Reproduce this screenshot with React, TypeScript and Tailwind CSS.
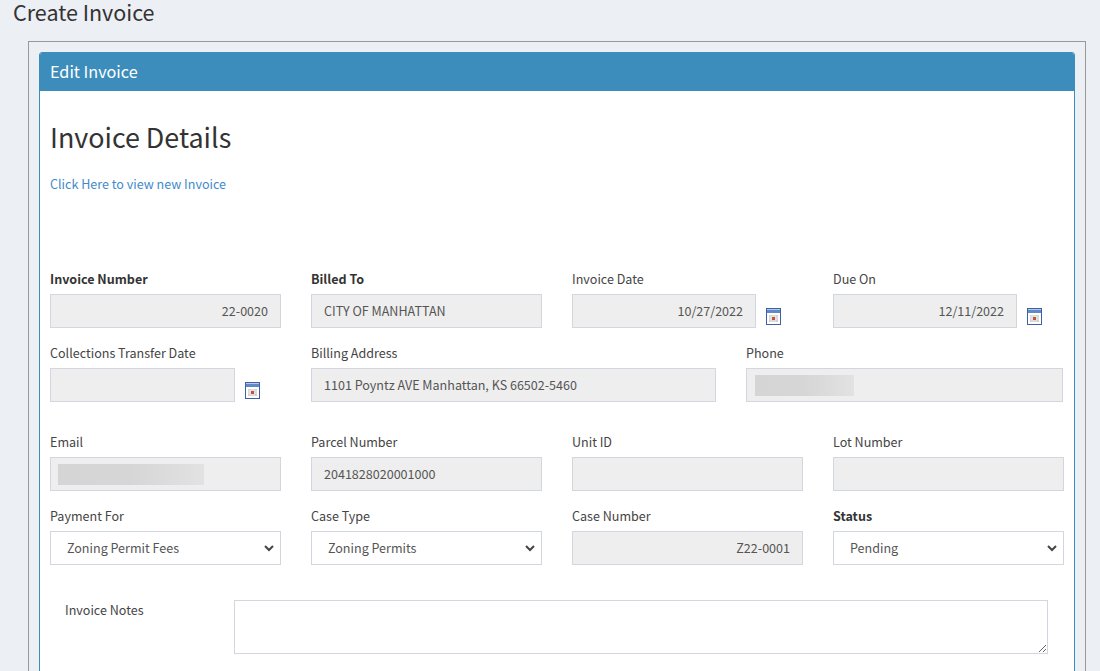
const inputBase =
  'h-[34px] w-full border border-[#d2d6de] px-3 text-[12.55px] leading-[30px] text-[#555] outline-none';
const readOnlyInput = `${inputBase} bg-[#eeeeee] pb-[2px]`;

function CalendarIcon() {
  return (
    <svg width="15" height="17" viewBox="0 0 15 17" className="mb-[3px] ml-[10px] shrink-0">
      <rect x="0.5" y="0.5" width="14" height="16" fill="#fff" stroke="#3f5fa6" />
      <rect x="1" y="1" width="13" height="4" fill="#5f8ac6" />
      <rect x="1" y="1" width="13" height="1" fill="#b4c9e8" />
      <rect x="3" y="7" width="9" height="7" fill="#d0d0d0" />
      <path d="M5 7v7M7 7v7M9 7v7M3 9h9M3 11h9" stroke="#f2f2f2" strokeWidth="0.7" />
      <rect x="6" y="9" width="3" height="3" fill="#c9503f" />
    </svg>
  );
}

function Field({
  label,
  bold,
  children,
}: {
  label: string;
  bold?: boolean;
  children: React.ReactNode;
}) {
  return (
    <div>
      <label className={`mb-[5px] block text-[12.55px] leading-[20px] ${bold ? 'font-bold text-[#333]' : 'text-[#444]'}`}>
        {label}
      </label>
      {children}
    </div>
  );
}

function DateInput({ value, width }: { value?: string; width: string }) {
  return (
    <div className="flex items-end">
      <input readOnly value={value ?? ''} className={`${readOnlyInput} ${width} text-right`} />
      <CalendarIcon />
    </div>
  );
}

function Blurred({ width, inset }: { width: string; inset: string }) {
  return (
    <div className={`${readOnlyInput} flex items-center !px-0 !pb-0`}>
      <div className={`${inset} h-[21px] ${width} bg-gradient-to-r from-[#d5d5d5] via-[#d6d6d6] to-[#e2e2e2]`} />
    </div>
  );
}

function SelectInput({ value }: { value: string }) {
  return (
    <div className="relative">
      <select className={`${inputBase} appearance-none bg-white !pl-4`} defaultValue={value}>
        <option>{value}</option>
      </select>
      <svg width="10" height="7" viewBox="0 0 10 7" className="pointer-events-none absolute right-[7px] top-[14px]">
        <path d="M1 1l4 4 4-4" fill="none" stroke="#444" strokeWidth="2" />
      </svg>
    </div>
  );
}

export default function App() {
  return (
    <div
      className="h-[671px] overflow-hidden bg-[#ecEff4] text-[#333]"
      style={{ fontFamily: '"Noto Sans CJK SC", "Open Sans", sans-serif' }}
    >
      <h1 className="pl-[13px] text-[21.5px] leading-[23px] text-[#333]">Create Invoice</h1>
      <div className="mx-[14px] ml-[28px] mt-[18px] border border-[#999] p-[10px]">
        <div className="overflow-hidden rounded-t-[3px] border border-[#3c8dbc] bg-white">
          <div className="flex h-[38px] items-center bg-[#3c8dbc] px-[10px] pb-[2px] text-[16.2px] text-white">Edit Invoice</div>
          <div className="px-[10px]">
            <h2 className="mt-[27px] text-[26.9px] leading-[38px] text-[#333]">Invoice Details</h2>
            <a className="mt-[18px] block text-[12.55px] leading-[20px] text-[#428bca]">Click Here to view new Invoice</a>

            <div className="mt-[75px] grid w-[1014px] grid-cols-4 gap-x-[30px]">
              <Field label="Invoice Number" bold>
                <input readOnly value="22-0020" className={`${readOnlyInput} text-right`} />
              </Field>
              <Field label="Billed To" bold>
                <input readOnly value="CITY OF MANHATTAN" className={readOnlyInput} />
              </Field>
              <Field label="Invoice Date">
                <DateInput value="10/27/2022" width="!w-[184px]" />
              </Field>
              <Field label="Due On">
                <DateInput value="12/11/2022" width="!w-[184px]" />
              </Field>
            </div>

            <div className="mt-[15px] grid w-[1013px] grid-cols-[231px_405px_317px] gap-x-[30px]">
              <Field label="Collections Transfer Date">
                <DateInput width="!w-[185px]" />
              </Field>
              <Field label="Billing Address">
                <input readOnly value="1101 Poyntz AVE Manhattan, KS 66502-5460" className={readOnlyInput} />
              </Field>
              <Field label="Phone">
                <Blurred width="w-[99px]" inset="ml-[8px]" />
              </Field>
            </div>

            <div className="mt-[30px] grid w-[1014px] grid-cols-4 gap-x-[30px] gap-y-[15px]">
              <Field label="Email">
                <Blurred width="w-[146px]" inset="ml-[7px]" />
              </Field>
              <Field label="Parcel Number">
                <input readOnly value="2041828020001000" className={readOnlyInput} />
              </Field>
              <Field label="Unit ID">
                <input readOnly className={readOnlyInput} />
              </Field>
              <Field label="Lot Number">
                <input readOnly className={readOnlyInput} />
              </Field>
              <Field label="Payment For">
                <SelectInput value="Zoning Permit Fees" />
              </Field>
              <Field label="Case Type">
                <SelectInput value="Zoning Permits" />
              </Field>
              <Field label="Case Number">
                <input readOnly value="Z22-0001" className={`${readOnlyInput} text-right`} />
              </Field>
              <Field label="Status" bold>
                <SelectInput value="Pending" />
              </Field>
            </div>

            <div className="mt-[35px] flex pb-[40px] pl-[15px]">
              <label className="w-[169px] text-[12.55px] leading-[20px] text-[#444]">Invoice Notes</label>
              <textarea className="h-[54px] w-[814px] border border-[#d2d6de] outline-none" />
            </div>
          </div>
        </div>
      </div>
    </div>
  );
}
